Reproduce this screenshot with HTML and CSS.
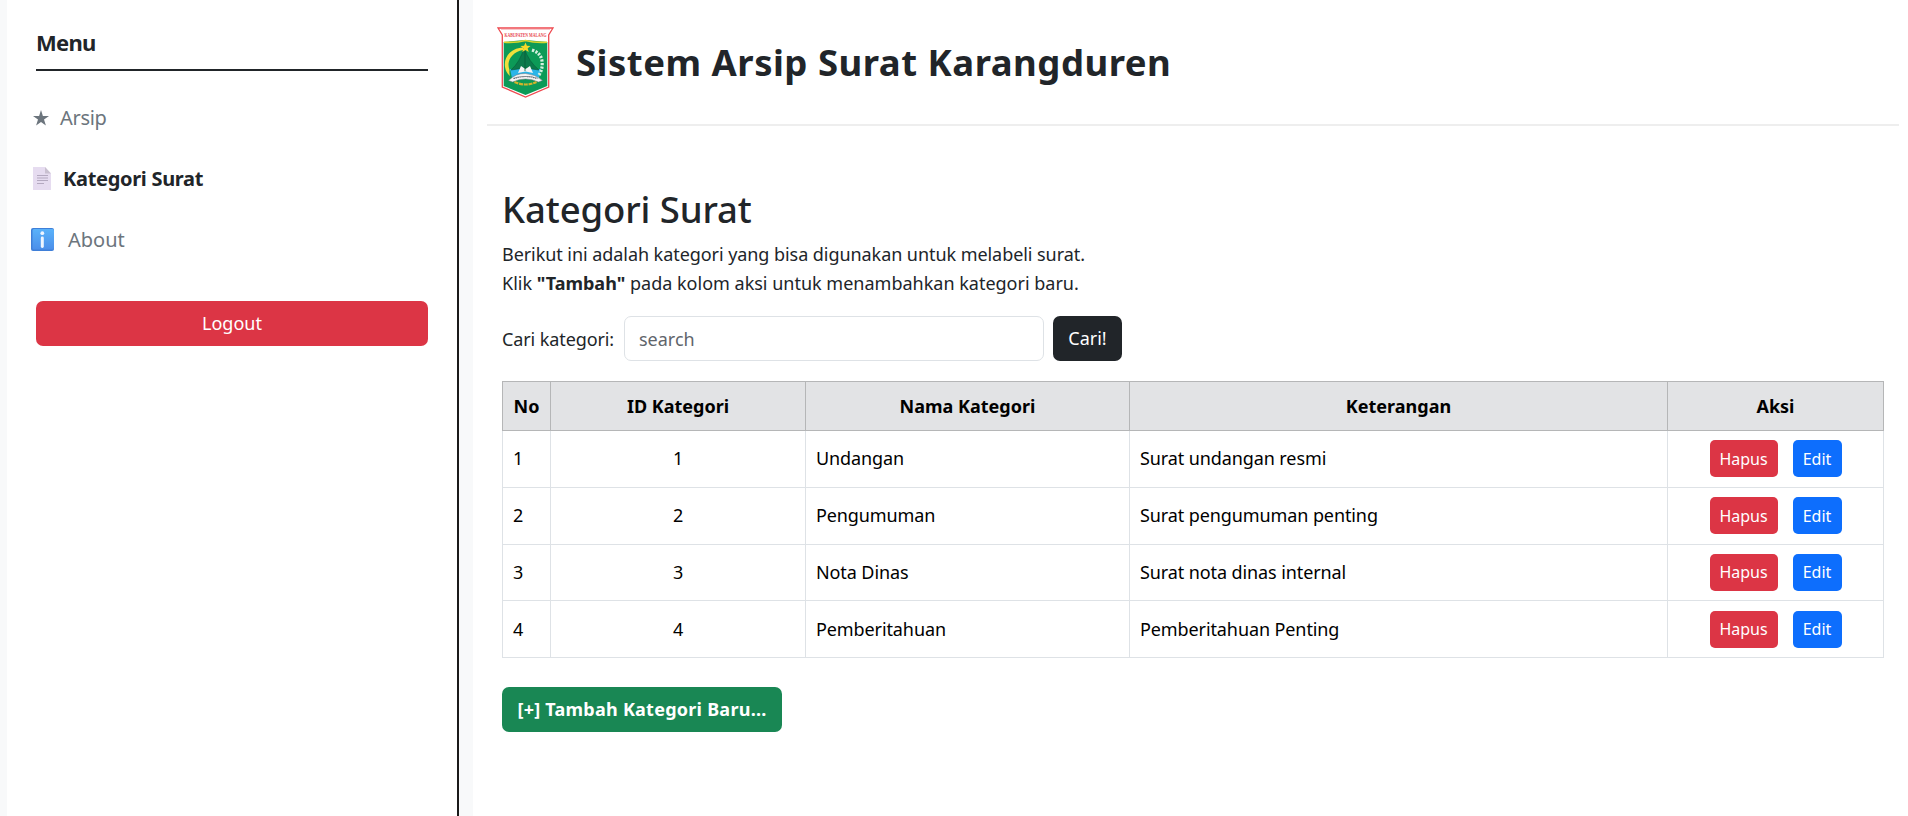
FILE: index.html
```html
<!DOCTYPE html>
<html lang="id">
<head>
<meta charset="utf-8">
<title>Sistem Arsip Surat Karangduren</title>
<link rel="stylesheet" href="styles.css">
</head>
<body>
<div class="layout">
  <aside class="sidebar">
    <h5 class="menu-title">Menu</h5>
    <nav class="menu">
      <a class="menu-link"><svg class="icon-star" viewBox="0 0 16 16"><path fill="#6c757d" d="M8 0l1.900 5.900H16l-5 3.700 1.900 6L8 12l-4.900 3.600L5 9.600 0 5.900h6.100z"/></svg><span>Arsip</span></a>
      <a class="menu-link active"><svg class="icon-page" viewBox="0 0 18 23"><path fill="#e6dcf0" d="M0 0h12l6 6.500V23H0z"/><path fill="#c9c0d0" d="M12 0l6 6.500h-6z"/><path stroke="#b4a9c0" d="M4 8.500h11M4 11h11M4 13.500h11M4 16.500h7"/></svg><span>Kategori Surat</span></a>
      <a class="menu-link"><svg class="icon-info" viewBox="0 0 23 23"><defs><linearGradient id="blue" x2="0" y2="1"><stop stop-color="#5ab2fa"/><stop offset="1" stop-color="#4c8fea"/></linearGradient></defs><rect width="23" height="23" rx="2" fill="#3f7fd8"/><rect x="1.500" y="1" width="21.500" height="20.500" rx="1.500" fill="url(#blue)"/><circle cx="11.300" cy="5.200" r="1.900" fill="#eef5ff"/><rect x="9.800" y="8.600" width="3" height="11.400" rx="1.400" fill="#eef5ff"/></svg><span class="about">About</span></a>
    </nav>
    <button class="btn btn-danger btn-block">Logout</button>
  </aside>
  <main class="main">
    <header class="header">
      <svg class="logo" viewBox="0 0 57 71">
        <path fill="#fff" stroke="#ee4a50" stroke-width="1.300" d="M1 1h55l-4.300 7v52L28.500 70 5.300 60V8z"/>
        <path fill="none" stroke="#f08a8e" stroke-width=".6" d="M4 2.300h49"/>
        <text x="28.500" y="9.800" text-anchor="middle" textLength="42" lengthAdjust="spacingAndGlyphs" class="logo-text">KABUPATEN MALANG</text>
        <path fill="#0c9a57" d="M6.700 15l21.800-2 21.800 2v44L28.500 68 6.700 59z"/>
        <path fill="none" stroke="#d7d52c" stroke-width="1.600" d="M7 15.200q12 .8 21.500-1.800 9.500 2.600 21.500 1.800"/>
        <path fill="#2bb5e8" d="M13 42h31l-2 9H15z"/>
        <path fill="#0b7a4b" stroke="#075c39" stroke-width=".6" d="M27 21q5 14 15 22l-14-2-14 2q9-8 13-22z"/>
        <path fill="#f4f4f4" d="M21 46l3-7 4.500 3 4.500-3 3 7-7.500-1.500z"/>
        <path fill="none" stroke="#075c39" stroke-width=".8" d="M28 24v20"/>
        <path fill="#f0df3b" d="M26 20.500C14 21 6.500 30 8 40q1 6 5 9-1-3-.5-6C9 34 15 25 26 23z"/>
        <path fill="none" stroke="#d6f1e0" stroke-width="3.200" stroke-dasharray="2.200 1.300" d="M35 23q9 3 10 11 1 8-3 14"/>
        <path fill="#f7d929" d="M28.500 15.500l1.400 3.300 3.600.2-2.800 2.300 1 3.600-3.200-1.900-3.200 1.900 1-3.600-2.800-2.300 3.600-.2z"/>
        <path fill="#f4f4f4" stroke="#69737a" stroke-width=".5" d="M11.500 53.500Q19 46 28.500 46.500T45.500 53.500l-4 1.500q-13-6-26 0z"/>
        <path fill="none" stroke="#46515b" stroke-width="1.200" stroke-dasharray="1.300 .7" d="M16.500 51.500q12-4 24 0"/>
        <path fill="none" stroke="#d3b42a" stroke-width="2.200" stroke-dasharray="4 .8" d="M17.500 55q11 5 22 0"/>
      </svg>
      <h1 class="title">Sistem Arsip Surat Karangduren</h1>
    </header>
    <section class="content">
      <h2 class="heading">Kategori Surat</h2>
      <p class="intro"><span class="intro-line">Berikut ini adalah kategori yang bisa digunakan untuk melabeli surat.</span><br>Klik <b>"Tambah"</b> pada kolom aksi untuk menambahkan kategori baru.</p>
      <form class="search">
        <label class="search-label">Cari kategori:</label>
        <input class="search-input" type="text" placeholder="search">
        <button class="btn btn-dark" type="button">Cari!</button>
      </form>
      <table class="table">
        <colgroup><col class="c-no"><col class="c-id"><col class="c-name"><col class="c-note"><col class="c-act"></colgroup>
        <thead><tr><th>No</th><th>ID Kategori</th><th>Nama Kategori</th><th>Keterangan</th><th>Aksi</th></tr></thead>
        <tbody>
          <tr><td>1</td><td class="center">1</td><td>Undangan</td><td>Surat undangan resmi</td><td><div class="actions"><button class="btn-sm btn-danger">Hapus</button><button class="btn-sm btn-primary">Edit</button></div></td></tr>
          <tr><td>2</td><td class="center">2</td><td>Pengumuman</td><td>Surat pengumuman penting</td><td><div class="actions"><button class="btn-sm btn-danger">Hapus</button><button class="btn-sm btn-primary">Edit</button></div></td></tr>
          <tr><td>3</td><td class="center">3</td><td>Nota Dinas</td><td>Surat nota dinas internal</td><td><div class="actions"><button class="btn-sm btn-danger">Hapus</button><button class="btn-sm btn-primary">Edit</button></div></td></tr>
          <tr><td>4</td><td class="center">4</td><td>Pemberitahuan</td><td>Pemberitahuan Penting</td><td><div class="actions"><button class="btn-sm btn-danger">Hapus</button><button class="btn-sm btn-primary">Edit</button></div></td></tr>
        </tbody>
      </table>
      <button class="btn btn-success">[+] Tambah Kategori Baru...</button>
    </section>
  </main>
</div>
</body>
</html>
```
FILE: styles.css
```css
* { box-sizing: border-box; }
body {
  margin: 0;
  background: #f8f9fa;
  color: #212529;
  font-family: "Noto Sans", "Open Sans", sans-serif;
  font-size: 18px;
  line-height: 29px;
}
h1, h2, h5, p { margin: 0; }
button, input { font-family: inherit; margin: 0; }
.layout { display: flex; height: 816px; padding-left: 7px; gap: 14px; }

.sidebar {
  width: 452px;
  padding: 28px 29px 0;
  background: #fff;
  border-right: 2px solid #1a1a1a;
}
.menu-title {
  height: 43px;
  border-bottom: 2px solid #212529;
  font-size: 22px;
  line-height: 29px;
  font-weight: 700;
  letter-spacing: -0.7px;
}
.menu { display: flex; flex-direction: column; padding-top: 32px; margin-left: -5px; }
.menu-link { display: flex; align-items: center; height: 29px; margin-bottom: 32px; color: #6c757d; font-size: 20px; letter-spacing: -0.3px; }
.menu-link.active { color: #212529; font-weight: 700; }
.about { letter-spacing: 0; }
.icon-star { width: 16px; height: 16px; margin: 0 11px 0 2px; }
.icon-page { width: 18px; height: 23px; margin: 0 12px 0 2px; }
.icon-info { width: 23px; height: 23px; margin-right: 14px; }

.btn {
  height: 45px;
  padding: 0;
  border: 0;
  border-radius: 7px;
  color: #fff;
  font-size: 18px;
  line-height: 29px;
  white-space: nowrap;
}
.btn-block { display: block; width: 100%; margin-top: 15px; }
.btn-danger { background: #dc3545; }
.btn-dark { background: #212529; width: 69px; }
.btn-primary { background: #0d6efd; }
.btn-success { background: #198754; font-weight: 700; width: 280px; margin-top: 29px; letter-spacing: 0.25px; }

.main { flex: 1; padding: 0 9px 0 14px; background: #fff; }
.header {
  display: flex;
  align-items: center;
  height: 126px;
  padding: 0 0 0 10px;
  border-bottom: 2px solid #eee;
}
.logo { width: 57px; height: 71px; margin-right: 22px; overflow: visible; }
.logo-text { font-family: "Liberation Serif", serif; font-size: 6.5px; font-weight: 700; fill: #e8474d; }
.title { font-size: 36.5px; line-height: 46px; font-weight: 700; letter-spacing: 0.5px; white-space: nowrap; }

.content { padding: 60px 15px 0; }
.heading { font-size: 36.5px; line-height: 46px; font-weight: 500; letter-spacing: -0.1px; margin-bottom: 8px; }
.intro { margin-bottom: 18px; }
.intro-line { letter-spacing: -0.06px; }
.search { display: flex; align-items: center; height: 45px; margin-bottom: 20px; }
.search-label { width: 122px; padding-top: 1px; letter-spacing: -0.1px; white-space: nowrap; }
.search-input {
  width: 420px;
  height: 45px;
  margin-right: 9px;
  padding: 0 14px;
  border: 1px solid #dee2e6;
  border-radius: 7px;
  font-size: 18px;
  color: #212529;
}
.search-input::placeholder { color: #5f656b; }

.table { width: 1382px; border-collapse: collapse; table-layout: fixed; color: #000; }
.c-no { width: 48px; }
.c-id { width: 255px; }
.c-name { width: 324px; }
.c-note { width: 538px; }
.table th, .table td { padding: 0 10px; border: 1px solid #dee2e6; text-align: left; white-space: nowrap; letter-spacing: -0.1px; }
.table th { height: 49px; background: #e2e3e5; border-color: #b5b6b7; text-align: center; font-weight: 700; letter-spacing: 0; }
.table td { height: 56.750px; }
.table .center { text-align: center; }
.actions { display: flex; justify-content: center; gap: 15px; }
.btn-sm { height: 37px; width: 68px; padding: 0; border: 0; border-radius: 5px; color: #fff; font-size: 16px; }
.btn-sm.btn-primary { width: 49px; }
```
